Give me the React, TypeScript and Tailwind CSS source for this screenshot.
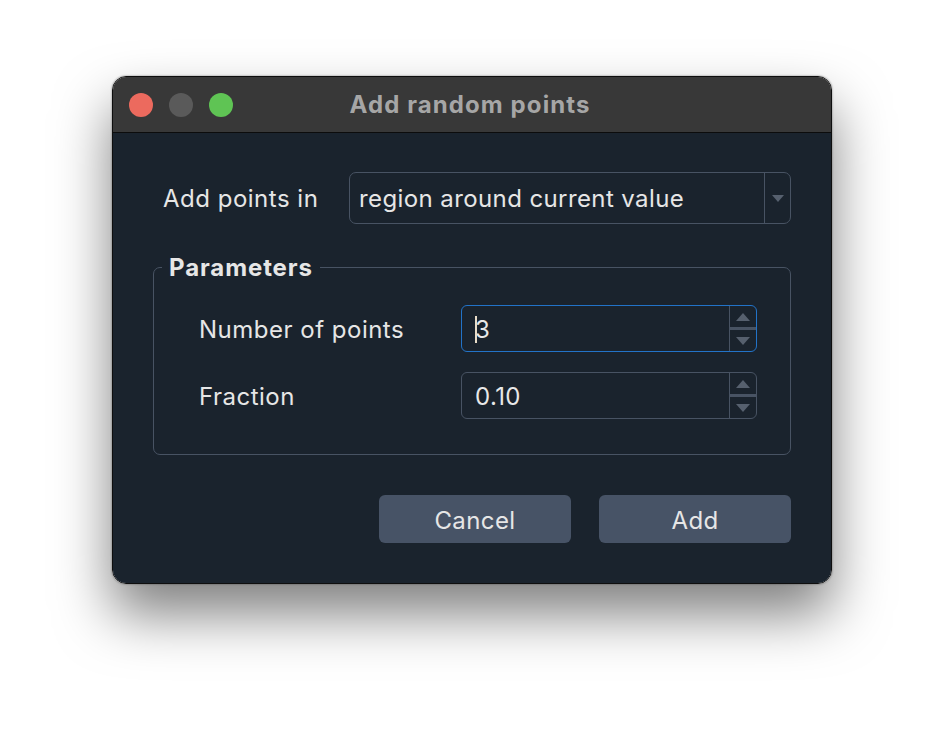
import React from "react";

function Spin({ value, focused }: { value: string; focused?: boolean }) {
  return (
    <div
      className={`flex h-[47px] w-[296px] rounded-[6px] border-[1.5px] ${
        focused ? "border-[#2273c8]" : "border-[#485363]"
      }`}
    >
      <div className="relative flex flex-1 items-center pl-[13px] pt-[2px] text-[24px] tracking-[0.4px] text-[#e8e8e8]">
        {focused && <span className="absolute left-[13px] top-[10px] h-[27px] w-[1.5px] bg-[#e8dcc8]" />}
        {value}
      </div>
      <div className="flex w-[27px] flex-col border-l-[1.5px] border-[#485363]">
        <div className="flex flex-1 items-center justify-center border-b-[3px] border-[#485363]">
          <svg width="14" height="8" viewBox="0 0 14 8">
            <path d="M0 8 L7 0 L14 8 Z" fill="#56606e" />
          </svg>
        </div>
        <div className="flex flex-1 items-center justify-center">
          <svg width="14" height="8" viewBox="0 0 14 8">
            <path d="M0 0 L7 8 L14 0 Z" fill="#56606e" />
          </svg>
        </div>
      </div>
    </div>
  );
}

export default function App() {
  return (
    <div
      className="h-[732px] w-[944px] bg-white pl-[112px] pt-[76px]"
      style={{ fontFamily: "Inter, 'Noto Sans', sans-serif" }}
    >
      <div className="flex h-[508px] w-[720px] flex-col overflow-hidden rounded-[14px] border border-[#0e0e0e] shadow-[0_30px_55px_rgba(0,0,0,0.5),0_0_2px_rgba(0,0,0,0.5)]">
        <div className="relative flex h-[56px] items-center border-b border-[#0c0c0c] bg-[#383838]">
          <div className="flex gap-[16px] pl-[16px]">
            <span className="h-[24px] w-[24px] rounded-full bg-[#ec6a5e]" />
            <span className="h-[24px] w-[24px] rounded-full bg-[#5a5a5a]" />
            <span className="h-[24px] w-[24px] rounded-full bg-[#5fc454]" />
          </div>
          <div className="absolute inset-0 flex items-center justify-center pr-[4px] text-[24px] font-bold tracking-[1.1px] text-[#a6a6a6]">
            Add random points
          </div>
        </div>
        <div className="flex flex-1 flex-col bg-[#1a232d] px-[40px] pt-[39px] text-[#e6e6e6]">
          <div className="flex items-center">
            <div className="w-[196px] pl-[10px] pt-[2px] text-[24px] tracking-[0.5px]">Add points in</div>
            <div className="flex h-[52px] flex-1 rounded-[7px] border-[1.5px] border-[#485363]">
              <div className="flex flex-1 items-center pl-[9px] pt-[2px] text-[24px] tracking-[0.4px]">region around current value</div>
              <div className="flex w-[26px] items-center justify-center border-l-[1.5px] border-[#485363]">
                <svg width="12" height="7" viewBox="0 0 12 7">
                  <path d="M0 0 L6 7 L12 0 Z" fill="#56606e" />
                </svg>
              </div>
            </div>
          </div>
          <div className="relative mt-[43px] h-[188px] rounded-[7px] border-[1.5px] border-[#485363]">
            <div className="absolute left-[8px] top-[-14px] bg-[#1a232d] px-[7px] text-[24px] font-bold leading-[28px] tracking-[0.9px] text-[#e6e6e6]">
              Parameters
            </div>
            <div className="flex flex-col gap-[20px] pl-[45px] pt-[37px]">
              <div className="flex items-center">
                <div className="w-[262px] pt-[2px] text-[24px] tracking-[0.5px]">Number of points</div>
                <Spin value="3" focused />
              </div>
              <div className="flex items-center">
                <div className="w-[262px] pt-[2px] text-[24px] tracking-[0.5px]">Fraction</div>
                <Spin value="0.10" />
              </div>
            </div>
          </div>
          <div className="mt-[40px] flex justify-end gap-[28px]">
            <button className="h-[48px] w-[192px] rounded-[6px] bg-[#475366] pt-[3px] text-[24px] tracking-[0.4px] text-[#e6e6e6]">Cancel</button>
            <button className="h-[48px] w-[192px] rounded-[6px] bg-[#475366] pt-[3px] text-[24px] tracking-[0.4px] text-[#e6e6e6]">Add</button>
          </div>
        </div>
      </div>
    </div>
  );
}
